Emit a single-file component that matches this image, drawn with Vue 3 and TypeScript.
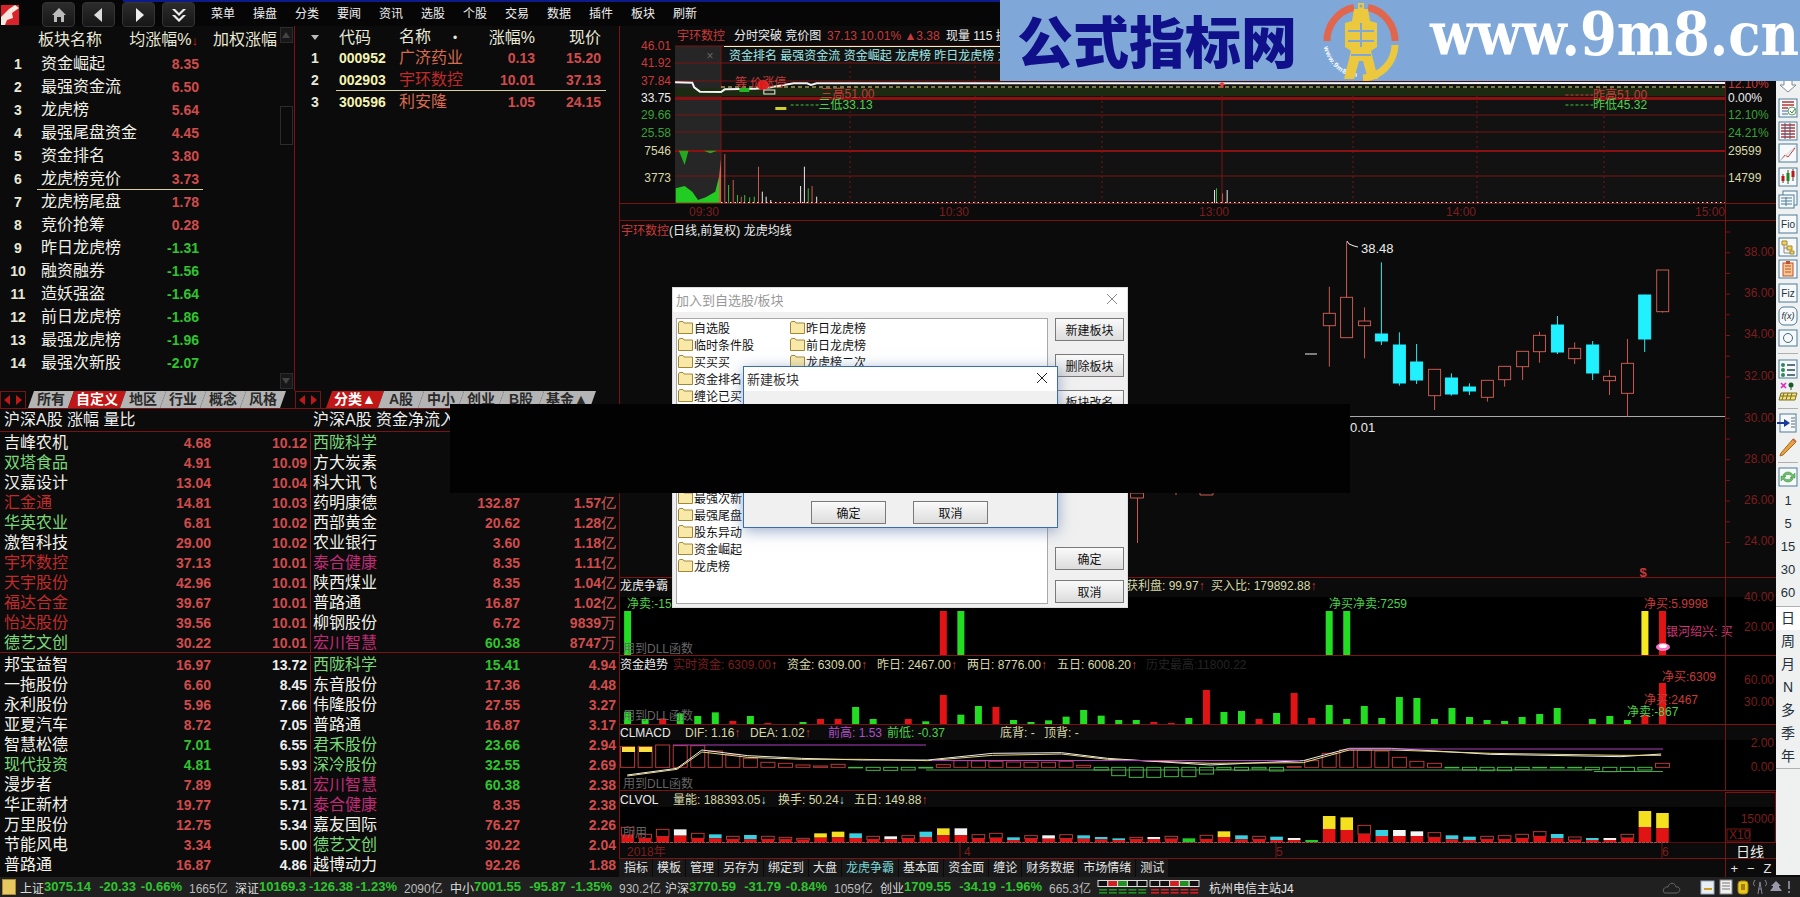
<script setup lang="ts">
type Label = { x: number; y: number; t: string; c: string }

const menus = ['菜单', '操盘', '分类', '要闻', '资讯', '选股', '个股', '交易', '数据', '插件', '板块', '刷新']

const boards = [
  ['资金崛起', '8.35'], ['最强资金流', '6.50'], ['龙虎榜', '5.64'], ['最强尾盘资金', '4.45'],
  ['资金排名', '3.80'], ['龙虎榜竞价', '3.73'], ['龙虎榜尾盘', '1.78'], ['竞价抢筹', '0.28'],
  ['昨日龙虎榜', '-1.31'], ['融资融券', '-1.56'], ['造妖强盗', '-1.64'], ['前日龙虎榜', '-1.86'],
  ['最强龙虎榜', '-1.96'], ['最强次新股', '-2.07'],
]

const stocks = [
  { code: '000952', name: '广济药业', cls: 'n-orange', pct: '0.13', price: '15.20' },
  { code: '002903', name: '宇环数控', cls: 'n-red', pct: '10.01', price: '37.13' },
  { code: '300596', name: '利安隆', cls: 'n-orange', pct: '1.05', price: '24.15' },
]

const leftTabs = ['所有', '自定义', '地区', '行业', '概念', '风格']
const rightTabs = ['分类▲', 'A股', '中小', '创业', 'B股', '基金▲']

// name, name colour, col 1, col 1 colour, col 2, unit
type Row = [string, string, string, string, string, string?]
const tableA: Row[] = [
  ['吉峰农机', '', '4.68', 'r', '10.12'], ['双塔食品', 'g', '4.91', 'r', '10.09'], ['汉嘉设计', '', '13.04', 'r', '10.04'],
  ['汇金通', 'x', '14.81', 'r', '10.03'], ['华英农业', 'g', '6.81', 'r', '10.02'], ['激智科技', '', '29.00', 'r', '10.02'],
  ['宇环数控', 'x', '37.13', 'r', '10.01'], ['天宇股份', 'x', '42.96', 'r', '10.01'], ['福达合金', 'x', '39.67', 'r', '10.01'],
  ['怡达股份', 'x', '39.56', 'r', '10.01'], ['德艺文创', 'g', '30.22', 'r', '10.01'],
]
const tableB: Row[] = [
  ['西陇科学', 'g', '', 'r', ''], ['方大炭素', '', '', 'r', ''], ['科大讯飞', '', '', 'r', ''],
  ['药明康德', '', '132.87', 'r', '1.57', '亿'], ['西部黄金', '', '20.62', 'r', '1.28', '亿'], ['农业银行', '', '3.60', 'r', '1.18', '亿'],
  ['泰合健康', 'p', '8.35', 'r', '1.11', '亿'], ['陕西煤业', '', '8.35', 'r', '1.04', '亿'], ['普路通', '', '16.87', 'r', '1.02', '亿'],
  ['柳钢股份', '', '6.72', 'r', '9839', '万'], ['宏川智慧', 'p', '60.38', 'g', '8747', '万'],
]
const tableC: Row[] = [
  ['邦宝益智', '', '16.97', 'r', '13.72'], ['一拖股份', '', '6.60', 'r', '8.45'], ['永利股份', '', '5.96', 'r', '7.66'],
  ['亚夏汽车', '', '8.72', 'r', '7.05'], ['智慧松德', '', '7.01', 'g', '6.55'], ['现代投资', 'g', '4.81', 'g', '5.93'],
  ['漫步者', '', '7.89', 'r', '5.81'], ['华正新材', '', '19.77', 'r', '5.71'], ['万里股份', '', '12.75', 'r', '5.34'],
  ['节能风电', '', '3.34', 'r', '5.00'], ['普路通', '', '16.87', 'r', '4.86'],
]
const tableD: Row[] = [
  ['西陇科学', 'g', '15.41', 'g', '4.94'], ['东音股份', '', '17.36', 'r', '4.48'], ['伟隆股份', '', '27.55', 'r', '3.27'],
  ['普路通', '', '16.87', 'r', '3.17'], ['君禾股份', 'g', '23.66', 'g', '2.94'], ['深冷股份', 'g', '32.55', 'g', '2.69'],
  ['宏川智慧', 'p', '60.38', 'g', '2.38'], ['泰合健康', 'p', '8.35', 'r', '2.38'], ['嘉友国际', '', '76.27', 'r', '2.26'],
  ['德艺文创', 'g', '30.22', 'r', '2.04'], ['越博动力', '', '92.26', 'r', '1.88'],
]

const indices = [
  ['上证', '3075.14', '-20.33', '-0.66%', '1665亿'], ['深证', '10169.3', '-126.38', '-1.23%', '2090亿'],
  ['中小', '7001.55', '-95.87', '-1.35%', '930.2亿'], ['沪深', '3770.59', '-31.79', '-0.84%', '1059亿'],
  ['创业', '1709.55', '-34.19', '-1.96%', '665.3亿'],
]

const chartTabs = ['指标', '模板', '管理', '另存为', '绑定到', '大盘', '龙虎争霸', '基本面', '资金面', '缠论', '财务数据', '市场情绪', '测试']

const folders1 = ['自选股', '临时条件股', '买买买', '资金排名', '缠论已买', '龙虎榜竞价', '最强龙虎榜', '造妖强盗', '竞价抢筹', '融资融券', '最强次新', '最强尾盘', '股东异动', '资金崛起', '龙虎榜']
const folders2 = ['昨日龙虎榜', '前日龙虎榜', '龙虎榜二次']

// chart geometry: bars sit on a fixed 17.54px pitch
const bx = (i: number) => 627.6 + 17.54 * i
const zy = (y: number) => 570 + y / 3
const z3 = (x: number, y: number) => `${610 + x / 2.613},${y / 3}`
const z6 = (x: number, y: number) => `${610 + x / 2.613},${zy(y)}`
const z7 = (x: number, y: number) => `${1200 + x / 2.613},${zy(y)}`

const hLines = [46, 63, 81, 115, 132, 176]
const dotLines = [850, 975, 1102, 1353, 1477, 1604]
const timeLabels = [['09:30', 704], ['10:30', 954], ['13:00', 1214], ['14:00', 1461], ['15:00', 1710]] as const

const intraLeft: Label[] = [
  { x: 671, y: 46, t: '46.01', c: 'f-red' }, { x: 671, y: 63, t: '41.92', c: 'f-red' }, { x: 671, y: 81, t: '37.84', c: 'f-red' },
  { x: 671, y: 98, t: '33.75', c: 'f-white' }, { x: 671, y: 115, t: '29.66', c: 'f-green' }, { x: 671, y: 133, t: '25.58', c: 'f-green' },
  { x: 671, y: 151, t: '7546', c: 'f-tan' }, { x: 671, y: 178, t: '3773', c: 'f-tan' },
]
const intraRight: Label[] = [
  { x: 1728, y: 98, t: '0.00%', c: 'f-white' }, { x: 1728, y: 115, t: '12.10%', c: 'f-green' },
  { x: 1728, y: 133, t: '24.21%', c: 'f-green' }, { x: 1728, y: 151, t: '29599', c: 'f-tan' }, { x: 1728, y: 178, t: '14799', c: 'f-tan' },
  { x: 1728, y: 84, t: '12.10%', c: 'f-red' },
]

const volBars: [number, number, string][] = [
  [300, 462, 'r'], [310, 555, 'g'], [322, 540, 'r'], [333, 585, 'g'], [343, 590, 'r'], [352, 585, 'g'], [365, 592, 'g'],
  [377, 590, 'g'], [388, 500, 'r'], [398, 575, 'w'], [408, 590, 'w'], [420, 600, 'w'], [498, 558, 'w'], [508, 500, 'w'],
  [518, 565, 'g'], [528, 558, 'r'], [540, 590, 'w'], [1000, 570, 'w'], [1005, 565, 'g'], [1021, 580, 'r'], [1033, 570, 'w'],
]
const stroke = { r: '#c85a50', g: '#46b846', w: '#e8e8e8' } as Record<string, string>

// x, high, low, body top, body bottom, filled (coordinates of the daily crop)
const candles = ([
  [338, 200, 440, 280, 317, false], [383, 65, 353, 232, 353, false], [430, 262, 415, 303, 317, false],
  [474, 127, 375, 342, 363, true], [521, 337, 497, 375, 489, true], [566, 372, 492, 426, 480, true],
  [613, 448, 570, 448, 527, false], [657, 460, 527, 474, 522, true], [704, 490, 525, 501, 513, true],
  [751, 481, 545, 481, 532, false], [796, 438, 500, 439, 479, false], [843, 393, 480, 394, 440, false],
  [887, 335, 428, 346, 395, false], [934, 288, 402, 315, 396, true], [979, 367, 432, 385, 416, false],
  [1026, 363, 480, 375, 459, true], [1070, 450, 525, 469, 482, false], [1117, 357, 590, 430, 520, false],
  [1162, 224, 396, 225, 357, true], [1209, 150, 278, 150, 275, false],
] as [number, number, number, number, number, boolean][]).map(([x, h, l, t, b, f]) => ({
  x: 1200 + x / 2.613, hi: 220 + h / 3, lo: 220 + l / 3, top: 220 + t / 3, bot: 220 + b / 3, filled: f,
}))

const kAxis = [[252, '38.00'], [293, '36.00'], [334, '34.00'], [376, '32.00'], [417.5, '30.00'], [459, '28.00'], [500, '26.00'], [541, '24.00']] as const
const kTicks = Array.from({ length: 16 }, (_, i) => 232 + i * 20.7)

const dragonBars: [number, string][] = [[0, '#22dd22'], [18, '#e01414'], [19, '#22dd22'], [40, '#22dd22'], [41, '#22dd22'], [58, '#f5ea20'], [59, '#e01414']]

const fundRaw: [number, string][] = [
  [425, 'g'], [447, 'g'], [445, 'r'], [430, 'g'], [438, 'g'], [427, 'g'], [453, 'r'], [438, 'g'], [459, 'r'], [462, 'g'],
  [456, 'g'], [447, 'r'], [447, 'r'], [411, 'g'], [447, 'g'], [463, 'g'], [447, 'r'], [454, 'g'], [375, 'r'], [434, 'g'],
  [408, 'g'], [411, 'r'], [450, 'g'], [456, 'g'], [451, 'g'], [440, 'g'], [420, 'g'], [437, 'g'], [450, 'g'], [450, 'g'],
  [456, 'r'], [459, 'r'], [444, 'g'], [360, 'r'], [426, 'g'], [423, 'g'], [447, 'r'], [429, 'g'], [369, 'r'], [444, 'r'],
  [405, 'g'], [447, 'g'], [408, 'g'], [444, 'g'], [381, 'g'], [384, 'g'], [447, 'g'], [414, 'g'], [441, 'g'], [450, 'g'],
  [453, 'g'], [441, 'g'], [432, 'g'], [414, 'g'], [462, 'g'], [447, 'g'], [438, 'g'], [450, 'g'], [435, 'r'], [339, 'r'],
]

const macdRaw = [
  530, 530, 525, 527, 527, 543, 553, 565, 577, 580, 585, 588, 583, 592, 601, 601, 600, 594, 584, 572, 573, 574, 576, 577, 577, 574,
  586, 600, 617, 622, 622, 620, 620, 612, 598, 601, 597, 603, 590, 572, 550, 540, 540, 543, 562, 574, 580, 592, 600, 602, 602, 599,
  592, 592, 592, 599, 605, 604, 600, 580,
]

// top, top of red part, kind (hollow, yellow, cyan, white, green)
const volRaw: [number, number, string][] = [
  [772, 795, 'h'], [793, 805, 'h'], [778, 800, 'h'], [778, 797, 'w'], [790, 805, 'h'], [793, 805, 'c'], [799, 808, 'h'], [795, 808, 'c'],
  [799, 808, 'h'], [802, 808, 'h'], [805, 810, 'h'], [790, 803, 'y'], [785, 802, 'y'], [790, 804, 'c'], [799, 808, 'h'], [799, 808, 'w'],
  [797, 806, 'h'], [785, 801, 'c'], [775, 796, 'y'], [775, 796, 'w'], [794, 806, 'h'], [790, 804, 'h'], [802, 810, 'c'], [797, 806, 'h'],
  [796, 806, 'w'], [794, 806, 'h'], [796, 806, 'c'], [801, 808, 'c'], [805, 810, 'c'], [802, 808, 'h'], [801, 807, 'w'], [799, 807, 'h'],
  [805, 818, 'g'], [796, 808, 'h'], [784, 801, 'y'], [796, 808, 'c'], [799, 808, 'h'], [800, 810, 'c'], [804, 810, 'w'], [810, 818, 'g'],
  [738, 777, 'y'], [742, 780, 'y'], [766, 792, 'h'], [780, 798, 'c'], [780, 798, 'w'], [784, 798, 'w'], [788, 802, 'h'], [796, 808, 'c'],
  [800, 810, 'c'], [799, 808, 'h'], [797, 808, 'h'], [793, 805, 'h'], [785, 799, 'h'], [792, 805, 'c'], [801, 810, 'h'], [804, 810, 'c'],
  [804, 810, 'w'], [793, 804, 'h'], [723, 771, 'y'], [729, 775, 'y'],
]
const volColor: Record<string, string> = { y: '#f5e020', c: '#38d0e0', w: '#f5f5f5', g: '#22cc22', h: 'none' }

const dif = [z6(45, 615), z6(175, 595), z6(240, 540), z6(360, 557), z6(500, 565), z6(660, 570), z6(830, 570), z6(1000, 550), z6(1180, 548), z6(1300, 565), z6(1568, 585), z7(270, 572), z7(390, 535), z7(500, 535), z7(760, 553), z7(1100, 560), z7(1205, 552)].join(' ')
const dea = [z6(45, 618), z6(175, 598), z6(240, 546), z6(360, 562), z6(500, 568), z6(660, 568), z6(830, 572), z6(1000, 556), z6(1180, 552), z6(1300, 568), z6(1568, 580), z7(270, 578), z7(390, 540), z7(500, 540), z7(760, 550), z7(1100, 556), z7(1205, 556)].join(' ')

const headFund = [
  { x: 673, t: '实时资金: 6309.00', c: 'f-dim' }, { x: 787, t: '资金: 6309.00', c: 'f-tan' }, { x: 877, t: '昨日: 2467.00', c: 'f-tan' },
  { x: 967, t: '两日: 8776.00', c: 'f-tan' }, { x: 1057, t: '五日: 6008.20', c: 'f-tan' },
]
const headMacd = [
  { x: 685, t: 'DIF: 1.16', c: 'f-tan', up: true }, { x: 750, t: 'DEA: 1.02', c: 'f-tan', up: true },
  { x: 828, t: '前高: 1.53', c: 'f-purple', up: false }, { x: 887, t: '前低: -0.37', c: 'f-lgreen', up: false },
  { x: 1000, t: '底背: -', c: 'f-tan', up: false }, { x: 1044, t: '顶背: -', c: 'f-tan', up: false },
]
const headVol = [
  { x: 673, t: '量能: 188393.05', arrow: '↓', ac: 'f-cyan' }, { x: 778, t: '换手: 50.24', arrow: '↓', ac: 'f-cyan' },
  { x: 854, t: '五日: 149.88', arrow: '↑', ac: 'f-red' },
]
const railNums = ['1', '5', '15', '30', '60']
const railCycles = ['日', '周', '月', 'N', '多', '季', '年']
const cells1 = ['w', 'r', 'g', 'w', 'w']
const cells2 = ['w', 'w', 'r', 'g', 'w']
</script>

<template>
  <div class="app">
    <header class="topbar">
      <svg class="logo" width="18" height="20" viewBox="0 0 18 20">
        <rect width="18" height="20" fill="#d8232a" />
        <path d="M0 12 L8 4 L14 0 L18 3 L11 8 L12 13 L6 15 L4 20 L0 20Z" fill="#f4e8e0" />
      </svg>
      <div class="tool-btns">
        <button class="tool"><svg width="16" height="16" viewBox="0 0 16 16"><path d="M8 1 L15 8 L13 8 L13 15 L10 15 L10 10 L6 10 L6 15 L3 15 L3 8 L1 8Z" fill="#bbb" /></svg></button>
        <button class="tool"><svg width="16" height="16" viewBox="0 0 16 16"><path d="M11 1 L11 15 L3 8Z" fill="#ddd" /></svg></button>
        <button class="tool"><svg width="16" height="16" viewBox="0 0 16 16"><path d="M5 1 L5 15 L13 8Z" fill="#eee" /></svg></button>
        <button class="tool"><svg width="16" height="16" viewBox="0 0 16 16"><path d="M1 2 L4 2 L8 6 L12 2 L15 2 L8 9Z M1 8 L4 8 L8 12 L12 8 L15 8 L8 15Z" fill="#eee" /></svg></button>
      </div>
      <nav class="menus">
        <span v-for="m in menus" :key="m" class="menu">{{ m }}</span>
      </nav>
    </header>

    <div class="workspace">
      <section class="left">
        <div class="lists">
          <div class="boards">
            <div class="board-main">
              <div class="board-head">
                <span class="bh-name">板块名称</span>
                <span class="bh-avg">均涨幅%<i class="down">↓</i></span>
                <span class="bh-wt">加权涨幅</span>
              </div>
              <div v-for="(b, i) in boards" :key="b[0]" class="board-row" :class="{ sel: i === 5 }">
                <span class="num">{{ i + 1 }}</span>
                <span class="name">{{ b[0] }}</span>
                <span class="val" :class="b[1].startsWith('-') ? 'v-g' : 'v-r'">{{ b[1] }}</span>
              </div>
            </div>
            <div class="scroll">
              <div class="sc-btn"><svg width="10" height="8" viewBox="0 0 10 8"><path d="M5 1 L9 7 L1 7Z" fill="#444" /></svg></div>
              <div class="sc-thumb"></div>
              <div class="sc-btn"><svg width="10" height="8" viewBox="0 0 10 8"><path d="M5 7 L9 1 L1 1Z" fill="#444" /></svg></div>
            </div>
          </div>
          <div class="stocks">
            <div class="stock-head">
              <span class="tri"></span>
              <span>代码</span>
              <span class="sh-name">名称<b class="dot">•</b></span>
              <span class="ra">涨幅%</span>
              <span class="ra">现价</span>
            </div>
            <div v-for="(s, i) in stocks" :key="s.code" class="stock-row" :class="{ sel: i === 1 }">
              <span class="num s-num">{{ i + 1 }}</span>
              <span class="code">{{ s.code }}</span>
              <span :class="s.cls">{{ s.name }}</span>
              <span class="val ra v-r">{{ s.pct }}</span>
              <span class="val ra v-r">{{ s.price }}</span>
            </div>
          </div>
        </div>

        <div class="tabs-row">
          <div class="tab-group">
            <div class="tab-arrows"><i class="al"></i><i class="ar"></i></div>
            <span v-for="(t, i) in leftTabs" :key="t" class="tab" :class="{ active: i === 1, wide: i === 1 }">{{ t }}</span>
          </div>
          <div class="tab-group tg-right">
            <div class="tab-arrows"><i class="al"></i><i class="ar"></i></div>
            <span v-for="(t, i) in rightTabs" :key="t" class="tab" :class="{ active: i === 0, wide: i === 0 || i === 5 }">{{ t }}</span>
          </div>
        </div>

        <div class="tables">
          <div class="t-head"><span class="th-l">沪深A股 涨幅 量比</span><span class="th-r">沪深A股 资金净流入</span></div>
          <div class="t-block">
            <div class="t-col">
              <div v-for="r in tableA" :key="r[0]" class="t-row a">
                <span class="cell-name" :class="'c-' + r[1]">{{ r[0] }}</span>
                <span class="val ra" :class="'v-' + r[3]">{{ r[2] }}</span>
                <span class="val ra v-r">{{ r[4] }}</span>
              </div>
            </div>
            <div class="t-col col-b">
              <div v-for="r in tableB" :key="r[0]" class="t-row b">
                <span class="cell-name" :class="'c-' + r[1]">{{ r[0] }}</span>
                <span class="val ra" :class="'v-' + r[3]">{{ r[2] }}</span>
                <span class="val ra v-r">{{ r[4] }}<em class="unit">{{ r[5] }}</em></span>
              </div>
            </div>
          </div>
          <div class="t-block lower">
            <div class="t-col">
              <div v-for="r in tableC" :key="r[0]" class="t-row a">
                <span class="cell-name" :class="'c-' + r[1]">{{ r[0] }}</span>
                <span class="val ra" :class="'v-' + r[3]">{{ r[2] }}</span>
                <span class="val ra v-w">{{ r[4] }}</span>
              </div>
            </div>
            <div class="t-col col-b">
              <div v-for="r in tableD" :key="r[0] + r[2]" class="t-row b">
                <span class="cell-name" :class="'c-' + r[1]">{{ r[0] }}</span>
                <span class="val ra" :class="'v-' + r[3]">{{ r[2] }}</span>
                <span class="val ra v-r">{{ r[4] }}</span>
              </div>
            </div>
          </div>
        </div>
      </section>

      <section class="charts">
        <!-- intraday -->
        <svg class="panel" width="1157" height="195" viewBox="619 26 1157 195">
          <rect x="675" y="46" width="46" height="157" fill="#262626" />
          <rect x="721" y="46" width="1004" height="157" fill="#121212" />
          <line v-for="y in hLines" :key="y" x1="675" x2="1725" :y1="y" :y2="y" class="grid" />
          <line v-for="x in dotLines" :key="x" :x1="x" :x2="x" y1="46" y2="203" class="grid dotted" />
          <line x1="721" x2="721" y1="46" y2="203" class="grid" />
          <line x1="1222" x2="1222" y1="81" y2="203" class="grid" />
          <rect x="675" y="88" width="1050" height="8" fill="#1c2a12" />
          <rect x="675" y="97" width="1050" height="3" fill="#8c1010" />
          <rect x="675" y="150" width="1050" height="2" fill="#8c1010" />
          <polyline :points="[z3(170,247),z3(215,248),z3(220,262),z3(235,275),z3(290,276),z3(300,268),z3(380,266),z3(420,262),z3(480,250),z3(515,250),z3(525,255),z3(540,250),'1725,83'].join(' ')" class="pline" />
          <line x1="721" x2="1725" y1="87" y2="87" class="ydash" />
          <path :d="`M${z3(172,608)} L${z3(172,565)} L${z3(195,558)} L${z3(215,575)} L${z3(230,600)} L${z3(250,592)} L${z3(275,575)} L${z3(285,530)} L${z3(285,608)}Z`" fill="#22cc22" />
          <path :d="`M${z3(285,608)} L${z3(285,530)} L${z3(290,476)} L${z3(290,608)}Z`" fill="#d86050" />
          <path :d="`M${z3(180,452)} L${z3(195,495)} L${z3(205,452)}Z M${z3(245,452)} L${z3(262,460)} L${z3(280,452)}Z`" fill="#22aa22" />
          <line v-for="b in volBars" :key="b[0]" :x1="b[0] > 900 ? 1200 + (b[0] - 1000 + 38) / 2.613 : 610 + b[0] / 2.613" :x2="b[0] > 900 ? 1200 + (b[0] - 1000 + 38) / 2.613 : 610 + b[0] / 2.613" :y1="b[1] / 3" y2="203" :stroke="stroke[b[2]]" />
          <line x1="721" x2="1725" y1="202.5" y2="202.5" class="wdots" />
          <rect :x="610 + 338 / 2.613" y="88" width="10" height="4" fill="#26b426" />
          <ellipse :cx="610 + 400 / 2.613" cy="85" rx="6" ry="5" fill="#e01818" />
          <rect :x="610 + 402 / 2.613" y="90" width="11" height="4" fill="none" stroke="#eee" />
          <rect :x="610 + 432 / 2.613" y="107" width="11" height="3" fill="#cfcf30" />
          <text x="735" y="83" class="t f-red">等 价涨停</text>
          <line :x1="610 + 472 / 2.613" :x2="610 + 545 / 2.613" y1="105" y2="105" class="gdash" />
          <text :x="610 + 545 / 2.613" y="105" class="t f-lgreen">三低33.13</text>
          <text :x="610 + 550 / 2.613" y="94" class="t f-red">三高51.00</text>
          <line :x1="1200 + 955 / 2.613" :x2="1200 + 1027 / 2.613" y1="105" y2="105" class="gdash" />
          <line :x1="1200 + 955 / 2.613" :x2="1200 + 1027 / 2.613" y1="95" y2="95" class="rdash" />
          <text :x="1200 + 1027 / 2.613" y="95" class="t f-red">昨高51.00</text>
          <text :x="1200 + 1027 / 2.613" y="105" class="t f-lgreen">昨低45.32</text>
          <text x="677" y="36" class="t f-red">宇环数控</text>
          <text x="734" y="36" class="t f-white">分时突破 竞价图</text>
          <text x="827" y="36" class="t f-red">37.13 10.01% ▲3.38</text>
          <text x="946" y="36" class="t f-white">现量 115 换手</text>
          <line x1="724" x2="1000" y1="46.5" y2="46.5" stroke="#f0f0c8" />
          <text x="729" y="56" class="t f-cyan">资金排名 最强资金流 资金崛起 龙虎榜 昨日龙虎榜 龙虎榜尾盘</text>
          <text x="710" y="56" text-anchor="middle" class="t f-gray">×</text>
          <text v-for="l in intraLeft" :key="l.t" :x="l.x" :y="l.y" text-anchor="end" class="t" :class="l.c">{{ l.t }}</text>
          <text v-for="l in intraRight" :key="l.y" :x="l.x" :y="l.y" class="t" :class="l.c">{{ l.t }}</text>
          <text v-for="t in timeLabels" :key="t[0]" :x="t[1]" y="212" text-anchor="middle" class="t f-dim">{{ t[0] }}</text>
          <path d="M1222 82 L1218 85 L1220.5 85 L1220.5 88 L1223.5 88 L1223.5 85 L1226 85Z" fill="#e04040" />
          <line x1="619" x2="1776" y1="203.5" y2="203.5" class="grid" />
          <line x1="619" x2="1776" y1="220.5" y2="220.5" class="grid" />
          <line x1="619.5" x2="619.5" y1="26" y2="221" class="grid" />
          <line x1="1725.5" x2="1725.5" y1="81" y2="221" class="grid" />
        </svg>

        <!-- daily -->
        <svg class="panel" width="1157" height="357" viewBox="619 221 1157 357">
          <text x="621" y="231" class="t f-red">宇环数控</text>
          <text x="669" y="231" class="t f-white">(日线,前复权) 龙虎均线</text>
          <line x1="1350" x2="1725" y1="416.5" y2="416.5" stroke="#aaa" />
          <g v-for="c in candles" :key="c.x">
            <line :x1="c.x" :x2="c.x" :y1="c.hi" :y2="c.lo" :stroke="c.filled ? '#30e8f0' : '#c85a50'" />
            <rect :x="c.x - 6" :y="c.top" width="12" :height="c.bot - c.top" :fill="c.filled ? '#20f0ff' : '#0b0b0b'" :stroke="c.filled ? '#20f0ff' : '#c85a50'" />
          </g>
          <path d="M1137.5 498 V543 M1130.5 493 H1143.5 V498 H1130.5Z M1200 493 V495 H1213 V493 M1176 493 V495" fill="none" stroke="#c85a50" />
          <path d="M1305 354 H1317" stroke="#eee" />
          <path d="M1347 241 L1349 244 L1354 246 L1358 247" stroke="#eee" fill="none" />
          <text x="1361" y="248" class="t t13 f-white">38.48</text>
          <text x="1350" y="427" class="t t13 f-white">0.01</text>
          <text x="1643" y="572" text-anchor="middle" class="t t13 f-red bold">$</text>
          <line x1="1725.5" x2="1725.5" y1="221" y2="578" class="grid" />
          <line v-for="y in kTicks" :key="y" x1="1725" x2="1730" :y1="y" :y2="y" class="grid" />
          <text v-for="k in kAxis" :key="k[1]" x="1774" :y="k[0]" text-anchor="end" class="t f-dim">{{ k[1] }}</text>
          <line x1="619.5" x2="619.5" y1="221" y2="578" class="grid" />
          <line x1="619" x2="1776" y1="577.5" y2="577.5" class="grid" />
        </svg>

        <!-- dragon -->
        <svg class="panel black" width="1157" height="78" viewBox="619 578 1157 78">
          <rect x="619" y="578" width="1157" height="19" fill="#0b0b0b" />
          <text x="620" y="586" class="t f-white">龙虎争霸</text>
          <text x="627" y="604" class="t f-lgreen">净卖:-15</text>
          <text x="1126" y="586" class="t f-tan">获利盘: 99.97<tspan class="f-red">↑</tspan></text>
          <text x="1211" y="586" class="t f-tan">买入比: 179892.88<tspan class="f-red">↑</tspan></text>
          <rect v-for="b in dragonBars" :key="b[0]" :x="bx(b[0]) - 3.5" y="611" width="7" height="45" :fill="b[1]" />
          <text x="1329" y="604" class="t f-lgreen">净买净卖:7259</text>
          <text x="1644" y="604" class="t f-red">净买:5.9998</text>
          <text x="1666" y="632" class="t f-pink">银河绍兴: 买</text>
          <ellipse cx="1663" cy="647" rx="7" ry="4" fill="#f478c8" />
          <ellipse cx="1663" cy="646" rx="4" ry="2" fill="#fff" />
          <text x="623" y="649" class="t f-gray">用到DLL函数</text>
          <text x="1774" y="597" text-anchor="end" class="t f-dim">40.00</text>
          <text x="1774" y="627" text-anchor="end" class="t f-dim">20.00</text>
          <line x1="1725.5" x2="1725.5" y1="578" y2="656" class="grid" />
          <line x1="619.5" x2="619.5" y1="578" y2="656" class="grid" />
          <line x1="619" x2="1776" y1="655.5" y2="655.5" class="grid" />
        </svg>

        <!-- fund trend -->
        <svg class="panel black" width="1157" height="69" viewBox="619 656 1157 69">
          <text x="620" y="665" class="t f-white">资金趋势</text>
          <text v-for="h in headFund" :key="h.x" :x="h.x" y="665" class="t" :class="h.c">{{ h.t }}<tspan class="f-red">↑</tspan></text>
          <text x="1146" y="665" class="t f-faint">历史最高:11800.22</text>
          <rect v-for="(b, i) in fundRaw" :key="i" :x="bx(i) - 3.5" :y="zy(b[0])" width="7" :height="(466 - b[0]) / 3" :fill="b[1] === 'r' ? '#e01414' : '#22dd22'" />
          <text x="623" y="716" class="t f-gray">用到DLL函数</text>
          <text x="1627" y="712" class="t f-lgreen">净卖:-867</text>
          <text x="1644" y="700" class="t f-red">净买:2467</text>
          <text x="1662" y="677" class="t f-red">净买:6309</text>
          <text x="1774" y="680" text-anchor="end" class="t f-dim">60.00</text>
          <text x="1774" y="702" text-anchor="end" class="t f-dim">30.00</text>
          <line x1="1725.5" x2="1725.5" y1="656" y2="725" class="grid" />
          <line x1="619.5" x2="619.5" y1="656" y2="725" class="grid" />
          <line x1="619" x2="1776" y1="724.5" y2="724.5" class="grid" />
        </svg>

        <!-- macd -->
        <svg class="panel black" width="1157" height="66" viewBox="619 725 1157 66">
          <rect x="619" y="725" width="1157" height="15" fill="#0b0b0b" />
          <text x="620" y="733" class="t f-white">CLMACD</text>
          <text v-for="h in headMacd" :key="h.x" :x="h.x" y="733" class="t" :class="h.c">{{ h.t }}<tspan v-if="h.up" class="f-red">↑</tspan></text>
          <g v-for="(t, i) in macdRaw" :key="i">
            <rect :x="bx(i) - 7" :y="Math.min(zy(t), zy(592))" width="14" :height="Math.max(Math.abs(592 - t) / 3, 0.5)" fill="none" :stroke="t >= 592 ? '#46b846' : '#b83a3a'" />
          </g>
          <rect x="622" y="747" width="13" height="5" fill="#f5e040" />
          <rect x="639" y="747" width="13" height="5" fill="#f5e040" />
          <polyline :points="dif" class="mline white" />
          <polyline :points="dea" class="mline yellow" />
          <path d="M673 745 H926 M932 760.5 H1300 M1347 749 H1663" stroke="#b040c0" fill="none" />
          <path d="M926 770 H1592 M1594 771.5 H1663 M622 790.5 H838" stroke="#46a846" fill="none" />
          <text x="623" y="784" class="t f-gray">用到DLL函数</text>
          <text x="1774" y="743" text-anchor="end" class="t f-dim">2.00</text>
          <text x="1774" y="767" text-anchor="end" class="t f-dim">0.00</text>
          <line x1="1725.5" x2="1725.5" y1="725" y2="791" class="grid" />
          <line x1="619.5" x2="619.5" y1="725" y2="791" class="grid" />
          <line x1="619" x2="1776" y1="790.5" y2="790.5" class="grid" />
        </svg>

        <!-- volume -->
        <svg class="panel black" width="1157" height="52" viewBox="619 791 1157 52">
          <rect x="619" y="791" width="1157" height="16" fill="#0b0b0b" />
          <text x="620" y="800" class="t f-white">CLVOL</text>
          <text v-for="h in headVol" :key="h.x" :x="h.x" y="800" class="t f-tan">{{ h.t }}<tspan :class="h.ac">{{ h.arrow }}</tspan></text>
          <g v-for="(v, i) in volRaw" :key="i">
            <rect :x="bx(i) - 6.3" :y="zy(v[0])" width="12.6" :height="(v[1] - v[0]) / 3" :fill="volColor[v[2]]" :stroke="v[2] === 'h' ? '#b83a3a' : 'none'" />
            <rect v-if="v[2] !== 'g'" :x="bx(i) - 6.3" :y="zy(v[1])" width="12.6" :height="(818 - v[1]) / 3" fill="#e01414" />
          </g>
          <line x1="622" x2="1668" y1="842.5" y2="842.5" class="vbase" />
          <text x="623" y="833" class="t f-gray">所用</text>
          <text x="1774" y="819" text-anchor="end" class="t f-dim">15000</text>
          <rect x="1727" y="829" width="23" height="12" fill="none" stroke="#7a1414" />
          <text x="1729" y="835" class="t f-dim">X10</text>
          <rect x="1725.5" y="792.5" width="50" height="50" fill="none" stroke="#7a1414" />
          <line x1="619.5" x2="619.5" y1="791" y2="843" class="grid" />
          <line x1="619" x2="1776" y1="842.8" y2="842.8" class="grid" />
        </svg>

        <!-- date axis -->
        <svg class="panel" width="1157" height="16" viewBox="619 843 1157 16">
          <text x="627" y="852" class="t f-dim">2018年</text>
          <path d="M960 843 V859 M1276 843 V859 M1662 843 V859" class="grid" />
          <text x="964" y="852" class="t f-dim">4</text>
          <text x="1276" y="852" class="t f-dim">5</text>
          <text x="1662" y="852" class="t f-dim">6</text>
          <text x="1750" y="852" text-anchor="middle" class="t t14 f-white">日线</text>
          <line x1="1725.5" x2="1725.5" y1="843" y2="859" class="grid" />
          <line x1="619.5" x2="619.5" y1="843" y2="859" class="grid" />
          <line x1="619" x2="1776" y1="858.5" y2="858.5" class="grid" />
        </svg>

        <div class="bottom-tabs">
          <div class="ct-list">
            <span v-for="t in chartTabs" :key="t" class="ct" :class="{ on: t === '龙虎争霸' }">{{ t }}</span>
          </div>
          <div class="zoom-btns"><span>+</span><span>−</span><span>Z</span></div>
        </div>
      </section>

      <aside class="rail">
        <svg class="rail-icons" width="24" height="398" viewBox="0 0 24 398">
          <path d="M8 0 V4 H4 L12 11 L20 4 H16 V0" fill="#fff" stroke="#7a8a94" />
          <g transform="translate(0,27)">
            <rect x="3" y="-9" width="18" height="18" class="fr" />
            <path d="M6 -6 H18 M6 -3 H18 M6 0 H12" stroke="#b0383a" stroke-width="1.4" /><path d="M6 3 H12 M6 6 H12" stroke="#386a9a" />
            <circle cx="16" cy="3" r="4" fill="none" stroke="#6aa06a" /><path d="M14 3 L16 5 L19 1" stroke="#3a8a3a" fill="none" />
          </g>
          <g transform="translate(0,50)">
            <rect x="3" y="-9" width="18" height="18" class="fr" />
            <path d="M5 -6 H19 M5 -3 H19 M5 0 H19 M5 3 H19 M5 6 H19" stroke="#b0383a" stroke-width="1.6" />
            <path d="M9 -8 V8 M14 -8 V8" stroke="#3a5a8a" />
          </g>
          <g transform="translate(0,72)">
            <rect x="3" y="-9" width="18" height="18" class="fr" />
            <path d="M5 7 L9 2 L12 4 L19 -5" stroke="#c04040" fill="none" /><path d="M4 8 L20 -7" stroke="#ccc" />
          </g>
          <g transform="translate(0,96)">
            <rect x="3" y="-9" width="18" height="18" class="fr" />
            <path d="M7 -3 V6 M12 -7 V7 M17 -8 V4" stroke="#444" /><rect x="5.5" y="-1" width="3" height="5" fill="#c01818" /><rect x="10.5" y="-4" width="3" height="8" fill="#1a8a1a" /><rect x="15.5" y="-6" width="3" height="6" fill="#c01818" />
          </g>
          <g transform="translate(0,119)">
            <rect x="7" y="-9" width="14" height="14" class="fr" /><rect x="3" y="-5" width="15" height="13" class="fr" />
            <path d="M5 -2 H16 M5 1 H16 M5 4 H16 M10 -3 V6" stroke="#4a7d9a" />
          </g>
          <g transform="translate(0,143)">
            <rect x="3" y="-9" width="18" height="18" class="fr" />
            <text x="12" y="0" text-anchor="middle" class="ico-t">Fio</text>
          </g>
          <g transform="translate(0,166)">
            <rect x="3" y="-9" width="18" height="18" class="fr" />
            <path d="M6 -6 H11 V-2 H6Z M11 -1 H16 V3 H11Z M14 4 H18 V7 H14Z" fill="#f0d060" stroke="#a08a30" /><path d="M8 -2 V6 H14 M8 1 H11" stroke="#888" fill="none" />
          </g>
          <g transform="translate(0,188)">
            <rect x="3" y="-9" width="18" height="18" class="fr" />
            <rect x="7" y="-6" width="10" height="13" fill="#f4c890" stroke="#c05030" /><path d="M9 -3 H15 M9 0 H15 M9 3 H15" stroke="#c05030" /><rect x="10" y="-8" width="4" height="3" fill="#c05030" />
          </g>
          <g transform="translate(0,212)">
            <rect x="3" y="-9" width="18" height="18" class="fr" />
            <text x="12" y="0" text-anchor="middle" class="ico-t">Fiz</text>
          </g>
          <g transform="translate(0,235)">
            <rect x="3" y="-9" width="18" height="18" rx="5" class="fr" />
            <text x="12" y="0" text-anchor="middle" class="ico-t it">f(x)</text>
          </g>
          <g transform="translate(0,257)">
            <rect x="3" y="-8" width="18" height="16" class="fr" />
            <circle cx="12" cy="0" r="4.5" fill="none" stroke="#3a6a7a" />
          </g>
          <path d="M2 272.5 H22" stroke="#b0b0b0" />
          <g transform="translate(0,288)">
            <rect x="3" y="-9" width="18" height="18" class="fr" />
            <circle cx="7" cy="-4" r="2" fill="#2a8a5a" /><circle cx="7" cy="1" r="2" fill="#2a8a5a" /><circle cx="7" cy="6" r="2" fill="#2a8a5a" />
            <path d="M11 -4 H19 M11 1 H19 M11 6 H19" stroke="#2a4a5a" stroke-width="1.5" />
          </g>
          <g transform="translate(0,311)">
            <path d="M5 -9 L10 -4 M10 -9 L5 -4" stroke="#e020c0" stroke-width="1.5" /><circle cx="15" cy="-7" r="2.5" fill="#1a5a2a" /><path d="M15 -5 V-2" stroke="#1a5a2a" />
            <path d="M5 1 H21 L19 8 H3Z" fill="#f0e080" stroke="#807020" /><path d="M8 1 L6 8 M12 1 L10 8 M16 1 L14 8 M4 4 H20" stroke="#807020" />
          </g>
          <path d="M2 327.5 H22" stroke="#b0b0b0" />
          <g transform="translate(0,342)">
            <rect x="4" y="-9" width="16" height="18" class="fr" />
            <path d="M1 -1 H8 V-4 L14 0 L8 4 V1 H1Z" fill="#1a3a9a" /><path d="M15 -5 H19 M15 -2 H19 M15 1 H19 M15 4 H19" stroke="#5a6a7a" />
          </g>
          <g transform="translate(0,366)">
            <path d="M5 6 L4 9 L7 8 L20 -5 L17 -8Z" fill="#e8a040" stroke="#a86a20" /><path d="M17 -8 L20 -5" stroke="#c86a50" stroke-width="2" />
          </g>
          <path d="M2 381.5 H22" stroke="#b0b0b0" />
        </svg>
        <svg class="rail-icons next" width="24" height="22" viewBox="0 0 24 22">
          <rect x="3" y="2" width="18" height="18" class="fr" />
          <path d="M7 9 C9 5 15 5 17 9 L19 7 V12 H14 L16 10 C14 8 10 8 8.5 10Z M17 13 C15 17 9 17 7 13 L5 15 V10 H10 L8 12 C10 14 14 14 15.5 12Z" fill="#6ac06a" stroke="#3a8a3a" stroke-width=".5" />
        </svg>
        <div class="rail-nums">
          <span v-for="n in railNums" :key="n">{{ n }}</span>
        </div>
        <div class="rail-cycles">
          <span v-for="(c, i) in railCycles" :key="c" :class="{ today: i === 0 }">{{ c }}</span>
        </div>
      </aside>
    </div>

    <footer class="status">
      <span class="st-icon"></span>
      <div v-for="d in indices" :key="d[0]" class="idx">
        <span class="i-lab">{{ d[0] }}</span>
        <span class="i-val">{{ d[1] }}</span>
        <span class="i-val ra">{{ d[2] }}</span>
        <span class="i-val ra">{{ d[3] }}</span>
        <span class="i-amt">{{ d[4] }}</span>
      </div>
      <svg class="st-boxes" width="104" height="16" viewBox="0 0 104 16">
        <g v-for="(c, i) in cells1" :key="'a' + i">
          <rect :x="1 + i * 9.8" y="1.5" width="9.8" height="6" :fill="c === 'r' ? '#d02020' : c === 'g' ? '#209020' : '#111'" stroke="#ddd" />
          <rect :x="2 + i * 9.8" y="10" width="8" height="1.6" fill="#209020" /><rect :x="2 + i * 9.8" y="13" width="8" height="1.6" fill="#209020" />
        </g>
        <g v-for="(c, i) in cells2" :key="'b' + i">
          <rect :x="53 + i * 9.8" y="1.5" width="9.8" height="6" :fill="c === 'r' ? '#d02020' : c === 'g' ? '#209020' : '#111'" stroke="#ddd" />
          <rect :x="54 + i * 9.8" y="10" width="8" height="1.6" fill="#d02020" /><rect :x="54 + i * 9.8" y="13" width="8" height="1.6" fill="#d02020" />
        </g>
      </svg>
      <span class="st-site">杭州电信主站J4</span>
      <svg class="st-tray" width="140" height="20" viewBox="0 0 140 20">
        <path d="M5 16 H16 C21 16 21 9 16 10 C15 5 9 5 8 10 C3 9 2 16 5 16Z" fill="none" stroke="#666" />
        <rect x="41" y="4" width="13" height="13" fill="#e8eef4" stroke="#9ab" /><path d="M44 12 H52" stroke="#d0a020" stroke-width="2" />
        <rect x="60" y="3" width="12" height="14" fill="#f0f0f0" stroke="#888" /><path d="M62 6 H70 M62 9 H70 M62 12 H70" stroke="#777" />
        <rect x="78" y="4" width="10" height="13" rx="3" fill="#e8c820" stroke="#a08010" /><rect x="81" y="7" width="4" height="6" fill="#a08010" />
        <path d="M100 5 L98 17 M100 5 L102 17 M98.5 12 H101.5 M95 3 C93 6 93 8 95 9 M105 3 C107 6 107 8 105 9" stroke="#889" fill="none" />
        <path d="M116 4 L121 9 H119 V10 L122 14 H110 L113 10 V9 H111Z" fill="#99a" />
        <path d="M129 4 V12 M129 14 V16" stroke="#99a" stroke-width="1.6" />
      </svg>
    </footer>

    <!-- reference has a black block over the middle of the screen -->
    <div class="dlg big">
      <div class="dlg-title">
        <span>加入到自选股/板块</span>
        <svg width="12" height="12" viewBox="0 0 12 12"><path d="M1 1 L11 11 M11 1 L1 11" stroke="#888" /></svg>
      </div>
      <div class="dlg-body">
        <div class="folder-box">
          <div class="f-col">
            <div v-for="f in folders1" :key="f" class="folder">
              <svg width="15" height="13" viewBox="0 0 15 13"><path d="M.5 3 V12.5 H14.5 V2 H6 L5 .5 H1.5 L.5 2Z" fill="#f8e9a8" stroke="#a08838" /></svg>
              <span>{{ f }}</span>
            </div>
          </div>
          <div class="f-col">
            <div v-for="f in folders2" :key="f" class="folder">
              <svg width="15" height="13" viewBox="0 0 15 13"><path d="M.5 3 V12.5 H14.5 V2 H6 L5 .5 H1.5 L.5 2Z" fill="#f8e9a8" stroke="#a08838" /></svg>
              <span>{{ f }}</span>
            </div>
          </div>
        </div>
        <div class="dlg-side">
          <div class="side-top">
            <button class="win-btn">新建板块</button>
            <button class="win-btn">删除板块</button>
            <button class="win-btn">板块改名</button>
          </div>
          <div class="side-bottom">
            <button class="win-btn">确定</button>
            <button class="win-btn">取消</button>
          </div>
        </div>
      </div>
    </div>

    <div class="dlg small">
      <div class="dlg-title small-title">
        <span>新建板块</span>
        <svg width="12" height="12" viewBox="0 0 12 12"><path d="M1 1 L11 11 M11 1 L1 11" stroke="#222" /></svg>
      </div>
      <div class="small-body">
        <button class="win-btn wide-btn">确定</button>
        <button class="win-btn wide-btn">取消</button>
      </div>
    </div>

    <div class="blackout"></div>

    <div class="banner">
      <span class="b-title">公式指标网</span>
      <svg class="b-logo" width="80" height="80" viewBox="0 0 80 80">
        <path d="M6 40 A34 34 0 0 1 33 6.5" fill="none" stroke="#e0664e" stroke-width="7" />
        <path d="M47 6.5 A34 34 0 0 1 74 40" fill="none" stroke="#e0664e" stroke-width="7" />
        <path d="M74 44 A34 34 0 0 1 42 77" fill="none" stroke="#ecc83e" stroke-width="7" />
        <path id="logo-arc" d="M3 46 A37 37 0 0 0 34 76" fill="none" />
        <text class="b-arc"><textPath href="#logo-arc">www.9m8.cn</textPath></text>
        <path d="M37 2 H43 V8 H47 L49 20 L56 22 V46 L50 50 L57 78 H47 L42 60 L38 60 L33 78 H23 L30 50 L24 46 V22 L31 20 L33 8 H37Z" fill="#ecc83e" />
        <path d="M27 30 H53 M27 40 H53 M40 22 V46 M30 54 H50" stroke="#7fa8d8" stroke-width="2" />
        <circle cx="40" cy="5" r="1.5" fill="#7fa8d8" />
      </svg>
      <span class="b-url">www.9m8.cn</span>
    </div>
  </div>
</template>

<style scoped>
.app {
  position: relative;
  width: 1800px;
  height: 897px;
  display: flex;
  flex-direction: column;
  overflow: hidden;
  background: #0b0b0b;
  color: #eee;
  font-family: "Liberation Sans", "Noto Sans CJK SC", sans-serif;
}

/* top bar */
.topbar {
  position: relative;
  height: 26px;
  display: flex;
  align-items: flex-start;
  background: #060606;
  flex: none;
}
.topbar::before {
  content: "";
  position: absolute;
  left: 123px;
  right: 0;
  top: 0;
  height: 2px;
  background: #0d1a8a;
}
.logo { margin: 5px 0 0 1px; }
.tool-btns { display: flex; margin: 2px 0 0 23px; gap: 7px; }
.tool {
  width: 33px;
  height: 25px;
  padding: 0;
  display: flex;
  align-items: center;
  justify-content: center;
  background: linear-gradient(#2c2c2c, #161616);
  border: 1px solid #333;
  border-radius: 4px;
}
.menus { display: flex; margin: 5px 0 0 16px; }
.menu { width: 42px; font-size: 12px; line-height: 18px; color: #eee; }

.workspace { flex: 1; display: flex; min-height: 0; }

/* left side */
.left { width: 619px; flex: none; display: flex; flex-direction: column; }
.lists { height: 365px; display: flex; flex: none; }
.boards {
  width: 295px;
  display: flex;
  border-right: 1px solid #7a1414;
  box-sizing: border-box;
  padding-top: 1px;
}
.board-main { width: 279px; padding-top: 1px; }
.board-head { position: relative; height: 24px; font-size: 16px; line-height: 24px; color: #e8e8d8; }
.bh-name { position: absolute; left: 38px; }
.bh-avg { position: absolute; right: 81px; }
.bh-wt { position: absolute; left: 213px; }
.down { font-style: normal; color: #d02020; font-size: 13px; }
.board-row {
  display: grid;
  grid-template-columns: 41px 108px 50px;
  height: 23px;
  line-height: 23px;
  align-items: center;
}
.board-row.sel { background: linear-gradient(#d8d0a0, #d8d0a0) 37px 100% / 166px 1px no-repeat; }
.num { font: bold 14px "Liberation Sans", sans-serif; text-align: center; padding-right: 5px; color: #e8e8d8; }
.name { font-size: 16px; color: #f0f0e8; white-space: nowrap; }
.val { font: bold 14px "Liberation Sans", sans-serif; text-align: right; white-space: nowrap; }
.ra { text-align: right; }
.v-r { color: #d04c4c; }
.v-g { color: #2fc42f; }
.v-w { color: #eeeeee; }
.scroll {
  width: 14px;
  display: flex;
  flex-direction: column;
  align-items: center;
  padding-bottom: 2px;
  height: 362px;
}
.sc-btn {
  width: 13px;
  height: 16px;
  display: flex;
  align-items: center;
  justify-content: center;
  border: 1px solid #2c2c2c;
  box-sizing: border-box;
  background: #181818;
}
.sc-thumb { width: 13px; height: 39px; margin: 63px 0 228px; border: 1px solid #2c2c2c; box-sizing: border-box; }

.stocks { flex: 1; padding-top: 0; }
.stock-head, .stock-row {
  display: grid;
  grid-template-columns: 44px 60px 66px 70px 66px;
  align-items: center;
}
.stock-head { height: 21px; font-size: 16px; line-height: 21px; color: #e8e8d8; }
.tri {
  justify-self: center;
  width: 0;
  height: 0;
  border: 4px solid transparent;
  border-top: 5px solid #bbb;
  border-bottom: 0;
  margin-right: 4px;
}
.sh-name { white-space: nowrap; }
.dot { margin-left: 22px; font-size: 12px; font-weight: normal; }
.stock-row { height: 22px; line-height: 22px; font-size: 16px; }
.stock-row.sel { background: linear-gradient(#d8d0a0, #d8d0a0) 41px 100% / 270px 1px no-repeat; }
.s-num { padding-right: 4px; }
.code { font: bold 14px "Liberation Sans", sans-serif; color: #f4f4b0; }
.n-orange { color: #d86a50; }
.n-red { color: #c02a2a; }

/* category tabs */
.tabs-row { height: 17px; display: flex; flex: none; border-bottom: 1px solid #7a1414; box-sizing: content-box; }
.tab-group { width: 295px; display: flex; align-items: stretch; }
.tg-right { width: 324px; }
.tab-arrows {
  width: 26px;
  display: flex;
  align-items: center;
  justify-content: space-around;
  border: 1px solid #7a1414;
  border-bottom: 0;
  box-sizing: border-box;
  margin-right: 2px;
  flex: none;
}
.tg-right .tab-arrows { margin-right: 5px; }
.al, .ar { width: 0; height: 0; border: 5px solid transparent; }
.al { border-right: 6px solid #c01818; border-left: 0; }
.ar { border-left: 6px solid #c01818; border-right: 0; }
.tab {
  width: 46px;
  margin-right: -6px;
  font-size: 14px;
  font-weight: bold;
  line-height: 17px;
  text-align: center;
  color: #2a2a2a;
  background: #b4b4b4;
  clip-path: polygon(6px 0, 100% 0, calc(100% - 6px) 100%, 0 100%);
}
.tab.wide { width: 58px; }
.tab.active { background: #c21717; color: #fff; }

/* tables */
.tables { flex: 1; position: relative; }
.t-head { height: 22px; display: flex; font-size: 16px; line-height: 22px; border-bottom: 1px solid #7a1414; }
.th-l { width: 310px; padding-left: 4px; box-sizing: border-box; }
.th-r { padding-left: 3px; }
.t-block { display: flex; height: 221px; border-bottom: 1px solid #7a1414; padding-top: 1px; box-sizing: border-box; }
.t-block.lower { border-bottom: 0; height: 223px; padding-top: 2px; }
.t-col { width: 310px; flex: none; }
.col-b { border-left: 1px solid #7a1414; width: 309px; box-sizing: border-box; }
.t-row { height: 20px; line-height: 20px; display: grid; align-items: center; white-space: nowrap; }
.t-row.a { grid-template-columns: 111px 96px 96px; padding-left: 4px; }
.t-row.b { grid-template-columns: 100px 107px 96px; padding-left: 2px; }
.cell-name { font-size: 16px; color: #f2f2ea; }
.c-g { color: #7ad87a; }
.c-x { color: #c02a2a; }
.c-p { color: #c22a78; }
.unit { font-style: normal; font-weight: normal; font-size: 15px; color: #cf5a5a; }

/* charts */
.charts { width: 1157px; flex: none; display: flex; flex-direction: column; min-width: 0; }
.panel { display: block; flex: none; }
.panel.black { background: #000; }
.t {
  font-size: 12px;
  dominant-baseline: central;
  font-family: "Liberation Sans", "Noto Sans CJK SC", sans-serif;
}
.t13 { font-size: 13px; }
.t14 { font-size: 14px; }
.bold { font-weight: bold; }
.f-red { fill: #c83a3a; }
.f-dim { fill: #7c1e1e; }
.f-white { fill: #ececec; }
.f-green { fill: #3aa03a; }
.f-lgreen { fill: #4cd24c; }
.f-tan { fill: #d8d8a8; }
.f-cyan { fill: #a0e8e8; }
.f-gray { fill: #666; }
.f-faint { fill: #242424; }
.f-purple { fill: #b050c8; }
.f-pink { fill: #d0347a; }
.grid { stroke: #7a1414; fill: none; }
.dotted { stroke-dasharray: 2 3; }
.pline { fill: none; stroke: #f4f4f4; stroke-width: 2; }
.ydash { stroke: #e4e470; stroke-dasharray: 4 3; }
.gdash { stroke: #3ac83a; stroke-dasharray: 3 2; }
.rdash { stroke: #c83a3a; stroke-dasharray: 3 2; }
.wdots { stroke: #eee; stroke-dasharray: 1.5 3; }
.mline { fill: none; }
.mline.white { stroke: #eee; }
.mline.yellow { stroke: #e8d880; }
.vbase { stroke: #f0f0f0; stroke-dasharray: 3 1; }

.bottom-tabs {
  height: 18px;
  flex: none;
  display: flex;
  justify-content: space-between;
  background: #0b0b0b;
}
.ct-list { display: flex; background: #191919; padding-left: 1px; }
.ct {
  padding: 0 4px;
  font-size: 12px;
  line-height: 18px;
  color: #e4e4e4;
  border-right: 1px solid #0a0a0a;
}
.ct.on { color: #7ad8d8; }
.zoom-btns {
  display: flex;
  align-items: center;
  gap: 9px;
  width: 51px;
  box-sizing: border-box;
  justify-content: center;
  border-left: 1px solid #7a1414;
  font-size: 13px;
  color: #e4e4e4;
}

/* right rail */
.rail {
  width: 24px;
  flex: none;
  height: 849px;
  display: flex;
  flex-direction: column;
  background: #eff1f1;
  color: #24303a;
  box-sizing: border-box;
  padding-top: 55px;
}
.rail-icons { display: block; flex: none; }
.rail-icons.next { margin-top: -13px; }
.fr { fill: #f6f8fa; stroke: #4a7d9a; }
.ico-t { font: 10px "Liberation Sans", sans-serif; fill: #22333e; dominant-baseline: central; }
.ico-t.it { font-style: italic; font-size: 9px; }
.rail-nums {
  display: flex;
  flex-direction: column;
  align-items: center;
  font-size: 13px;
  line-height: 23px;
  margin-top: 1px;
  padding-bottom: 2px;
}
.rail-cycles {
  display: flex;
  flex-direction: column;
  align-items: center;
  font-size: 14px;
  line-height: 23px;
  border-top: 1px solid #b0b0b0;
  border-bottom: 1px solid #b0b0b0;
  padding-bottom: 0;
}
.today { width: 100%; text-align: center; background: #fff; }

/* status bar */
.status {
  height: 20px;
  flex: none;
  display: flex;
  align-items: center;
  background: #202020;
  font-size: 13px;
  color: #ccc;
}
.st-icon {
  width: 12px;
  height: 14px;
  margin: 0 4px 0 2px;
  background: #e8c860;
  border: 1px solid #a88a30;
  flex: none;
}
.idx {
  width: 215px;
  flex: none;
  display: grid;
  grid-template-columns: 24px 50px 42px 46px 46px;
  white-space: nowrap;
}
.i-lab { font-size: 12px; color: #ddd; }
.i-val { font-weight: bold; color: #2fc42f; }
.i-amt { padding-left: 7px; font-size: 12px; color: #bbb; }
.st-boxes { flex: none; margin-left: 2px; }
.st-site { margin-left: 8px; font-size: 12px; color: #e4e4e4; flex: 1; }
.st-tray { flex: none; }

/* dialogs over the market view */
.dlg { position: absolute; box-sizing: border-box; background: #f0f0f0; font-size: 12px; color: #111; }
.dlg.big { left: 672px; top: 287px; width: 456px; height: 321px; border: 1px solid #ddd; }
.dlg.small {
  left: 743px;
  top: 366px;
  width: 315px;
  height: 162px;
  border: 1px solid #3a6ea5;
  box-shadow: 0 3px 14px rgba(90, 120, 170, 0.6);
}
.dlg-title {
  height: 22px;
  padding: 0 9px 2px 3px;
  display: flex;
  align-items: center;
  justify-content: space-between;
  background: #fff;
  color: #999;
  font-size: 13px;
}
.small-title { color: #333; }
.dlg-body { display: flex; padding: 6px 3px 0 3px; }
.folder-box {
  width: 373px;
  height: 286px;
  box-sizing: border-box;
  border: 1px solid #a8a8a8;
  background: #fff;
  display: flex;
  padding: 0 1px;
}
.f-col { width: 112px; }
.folder { display: flex; align-items: center; height: 17px; gap: 1px; white-space: nowrap; }
.dlg-side {
  flex: 1;
  display: flex;
  flex-direction: column;
  justify-content: space-between;
  padding: 0 0 1px 7px;
  height: 285px;
}
.side-top, .side-bottom { display: flex; flex-direction: column; }
.side-top { gap: 13px; }
.side-bottom { gap: 10px; }
.win-btn {
  width: 69px;
  height: 23px;
  padding: 0;
  font: 12px "Liberation Sans", "Noto Sans CJK SC", sans-serif;
  color: #111;
  background: linear-gradient(#fafafa, #dcdcdc);
  border: 1px solid #7a7a7a;
}
.small-body { height: 136px; display: flex; align-items: flex-end; gap: 27px; padding: 0 0 3px 67px; box-sizing: border-box; }
.wide-btn { width: 75px; }
.blackout { position: absolute; left: 450px; top: 404px; width: 900px; height: 89px; background: #020202; }

/* site banner */
.banner {
  position: absolute;
  right: 0;
  top: 0;
  left: 1000px;
  height: 81px;
  display: flex;
  align-items: center;
  padding-left: 17px;
  background: #7fa8d8;
  box-sizing: border-box;
}
.b-title {
  font-family: "Noto Sans CJK SC", sans-serif;
  font-size: 56px;
  font-weight: 900;
  line-height: 75px;
  color: #10108a;
  margin-top: -4px;
  white-space: nowrap;
}
.b-logo { margin-left: 24px; flex: none; }
.b-arc { font: bold 7px "Liberation Sans", sans-serif; fill: #fff; letter-spacing: 0.6px; }
.b-url {
  margin-left: 29px;
  font: bold 53px "DejaVu Serif", serif;
  color: #fff;
  white-space: nowrap;
  display: inline-block;
  transform: scaleY(1.12);
  margin-top: -14px;
}
</style>

<style>
html, body { margin: 0; background: #0b0b0b; }
</style>
